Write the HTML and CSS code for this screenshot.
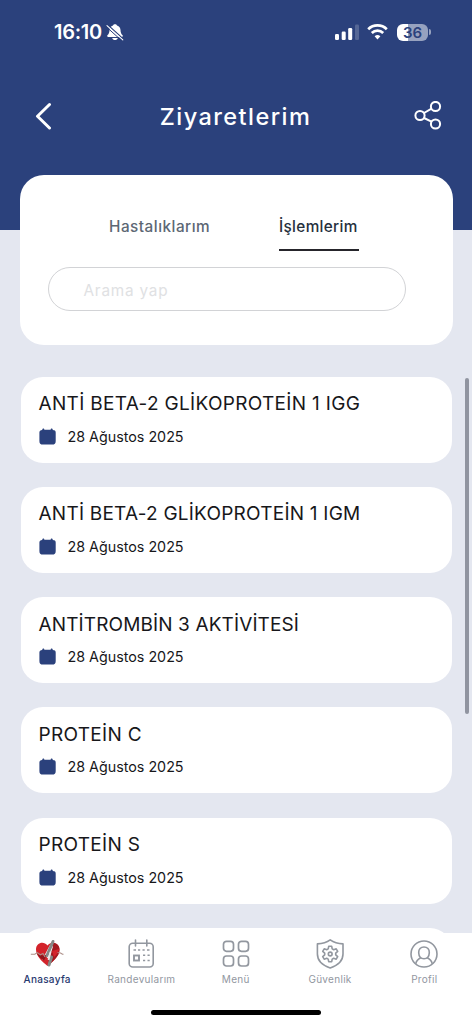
FILE: index.html
```html
<!DOCTYPE html>
<html lang="tr">
<head>
<meta charset="utf-8">
<title>Ziyaretlerim</title>
<link rel="stylesheet" href="styles.css">
</head>
<body>
<div class="app">
  <header class="header">
    <div class="status">
      <div class="status-left">
        <span class="time">16:10</span>
        <svg class="bell" width="18" height="18" viewBox="0 0 18 18"><path d="M9 1.200c-1 0-1.700.5-2 1.200C4.700 3 3.600 4.700 3.500 7c-.1 2.700-.7 3.900-1.900 5.100-.7.7-.5 1.800.4 1.800h14c.9 0 1.100-1.100.4-1.800C15.200 10.900 14.600 9.700 14.500 7c-.1-2.300-1.200-4-3.500-4.600C10.700 1.700 10 1.200 9 1.200zM6.200 14.900c.4 1.300 1.500 2.100 2.800 2.100s2.400-.8 2.800-2.100z" fill="#fff"/><path d="M1.800 1.900l15.500 14" stroke="#2b417c" stroke-width="1.300"/><path d="M1 2.600l15.800 14.300" stroke="#fff" stroke-width="1.100" stroke-linecap="round"/><path d="M.3 3.800l15.500 14" stroke="#2b417c" stroke-width="1"/></svg>
      </div>
      <div class="status-right">
        <svg width="24" height="16" viewBox="0 0 24 16" fill="#fff"><rect y="10" width="4" height="6" rx="1.200"/><rect x="6.700" y="7.500" width="4" height="8.500" rx="1.200"/><rect x="13.200" y="4" width="4" height="12" rx="1.200"/><rect x="20" y=".5" width="4" height="15.500" rx="1.200" opacity=".2"/></svg>
        <svg class="wifi" width="21" height="16" viewBox="0 0 21 16" fill="none" stroke="#fff" stroke-width="2.700"><path d="M1.200 5.200a13.300 13.300 0 0 1 18.600 0"/><path d="M4.800 9a8.200 8.200 0 0 1 11.400 0"/><path d="M10.500 15.500l-2.900-3.200a4.300 4.300 0 0 1 5.800 0z" fill="#fff" stroke="none"/></svg>
        <span class="battery">36</span><i class="battery-cap"></i>
      </div>
    </div>
    <div class="titlebar">
      <svg class="back" width="18" height="28" viewBox="0 0 18 28" fill="none" stroke="#fff" stroke-width="3" stroke-linecap="round" stroke-linejoin="round"><path d="M15.500 2.500L3.500 14.200l12 11.800"/></svg>
      <h1>Ziyaretlerim</h1>
      <svg class="share" width="28" height="30" viewBox="0 0 28 30" fill="none" stroke="#fff" stroke-width="2"><circle cx="6" cy="14.500" r="4.600"/><circle cx="21.500" cy="5.500" r="4.600"/><circle cx="21.500" cy="23" r="4.600"/><path d="M10 12l7.500-4.300M10 17l7.500 3.700"/></svg>
    </div>
  </header>
  <section class="panel">
    <div class="tabs"><span class="tab">Hastalıklarım</span><span class="tab active">İşlemlerim</span></div>
    <div class="search"><span>Arama yap</span></div>
  </section>
  <main class="list">
    <article class="card"><h2 class="t1">ANTİ BETA-2 GLİKOPROTEİN 1 IGG</h2><div class="date"><svg width="17" height="17" viewBox="0 0 17 17"><use href="#cal"/></svg><span>28 Ağustos 2025</span></div></article>
    <article class="card"><h2 class="t2">ANTİ BETA-2 GLİKOPROTEİN 1 IGM</h2><div class="date"><svg width="17" height="17" viewBox="0 0 17 17"><use href="#cal"/></svg><span>28 Ağustos 2025</span></div></article>
    <article class="card"><h2 class="t3">ANTİTROMBİN 3 AKTİVİTESİ</h2><div class="date"><svg width="17" height="17" viewBox="0 0 17 17"><use href="#cal"/></svg><span>28 Ağustos 2025</span></div></article>
    <article class="card"><h2 class="t4">PROTEİN C</h2><div class="date"><svg width="17" height="17" viewBox="0 0 17 17"><use href="#cal"/></svg><span>28 Ağustos 2025</span></div></article>
    <article class="card"><h2 class="t5">PROTEİN S</h2><div class="date"><svg width="17" height="17" viewBox="0 0 17 17"><use href="#cal"/></svg><span>28 Ağustos 2025</span></div></article>
    <article class="card"></article>
  </main>
  <i class="scrollbar"></i>
  <nav class="nav">
    <div class="items">
      <div class="item current"><svg width="34" height="30" viewBox="0 0 34 30"><path d="M17.500 27C13.500 23.500 6 18 6 10.500 6 4 13.500 1.500 17.500 6.500 21.500 1.500 29.500 4 29.500 10.500 29.500 18 21.500 23.500 17.500 27z" fill="#d3232b"/><path d="M22 4c4-.5 7.500 2 7.500 6.500 0 7-7 12-10.500 15l-1-5z" fill="#a3191f"/><path d="M22 12l7-2c-.5 3.500-2.500 6-5 8z" fill="#d3232b"/><path d="M12 21l8-15 3 1.500-4 13-3-3z" fill="#f5f4f5"/><path d="M7 15l6 1.500 4-1-3 6c-3-2-5.500-4-7-6.500z" fill="#8e171d"/><path d="M.8 15.300h4l2.500-1.700 3 2.200 2.700-1.300 2 3.500M27.500 13.500l3 .5 2 1.300h1" fill="none" stroke="#ad8f88" stroke-width="1.100"/><path d="M23 2.500l-6 14M21.500 18l-2.500 8" fill="none" stroke="#858886" stroke-width="3" stroke-linecap="round"/><path d="M20.500 13l-2 8" stroke="#eceaea" stroke-width="1.800"/></svg><span>Anasayfa</span></div>
      <div class="item"><svg width="30" height="30" viewBox="0 0 30 30" fill="none" stroke="#92979f" stroke-width="1.600"><rect x="3.200" y="4.300" width="24" height="23.700" rx="3.500"/><path d="M9.500 1v6M20.800 1v6" stroke-linecap="round"/><path d="M7.500 11h2.500M12 11h2.200M16.500 11h2.200M21 11h2.500M17 16.300h2.200M21.500 16.300h2.200M17 21.500h2.200M21.500 21.500h2.200"/><rect x="8" y="16.500" width="5" height="5" stroke-width="1.900"/></svg><span>Randevularım</span></div>
      <div class="item"><svg width="30" height="30" viewBox="0 0 30 30" fill="none" stroke="#92979f" stroke-width="1.700"><rect x="2.500" y="2.300" width="10" height="10" rx="3"/><rect x="17.500" y="2.300" width="10" height="10" rx="3"/><rect x="2.500" y="17" width="10" height="10" rx="3"/><rect x="17.500" y="17" width="10" height="10" rx="3"/></svg><span>Menü</span></div>
      <div class="item"><svg width="30" height="30" viewBox="0 0 30 30" fill="none" stroke="#92979f" stroke-width="1.600" stroke-linejoin="round"><path d="M15.200.9C11.500 3.700 7 4.800 2.400 4.900V15c0 7 5.500 11.500 12.800 14C22.500 26.500 28 22 28 15V4.900C23.500 4.800 19 3.700 15.200.9z"/><path d="M13.700 7.300h3l.5 2.600 1.500.8 2.500-.9 1.500 2.600-2 1.800v1.600l2 1.800-1.500 2.600-2.500-.9-1.500.8-.5 2.600h-3l-.5-2.600-1.500-.8-2.500.9-1.500-2.600 2-1.800v-1.600l-2-1.800 1.500-2.600 2.500.9 1.500-.8z"/><circle cx="15.200" cy="15" r="1.900"/></svg><span>Güvenlik</span></div>
      <div class="item"><svg width="30" height="30" viewBox="0 0 30 30" fill="none" stroke="#92979f" stroke-width="1.600"><circle cx="15" cy="15" r="13"/><path d="M15 8c3.300 0 5.500 2.300 5.300 5.700-.2 3.800-2.500 6-5.300 6s-5.100-2.200-5.300-6C9.500 10.300 11.700 8 15 8zM6.700 24.900c.6-3 2.500-5 5.200-6.200M23.300 24.900c-.6-3-2.500-5-5.200-6.200"/></svg><span>Profil</span></div>
    </div>
    <i class="home"></i>
  </nav>
</div>
<svg class="defs"><symbol id="cal" viewBox="0 0 17 17"><path d="M4.300.5c.6 0 1 .5 1.100 1.300h6.200c.1-.8.500-1.300 1.100-1.300s1 .6 1.100 1.400c1.800.1 2.900.7 2.900 2.500v8.500c0 2.700-1 3.600-3.600 3.600H4c-2.600 0-3.600-.9-3.600-3.600V4.400c0-1.700 1-2.300 2.800-2.500C3.300 1.100 3.700.5 4.300.5z" fill="#2b417c"/></symbol></svg>
</body>
</html>
```

FILE: styles.css
```css
* { box-sizing: border-box; }
body { margin: 0; font-family: Inter, "Noto Sans", sans-serif; background: #e4e7f0; }
.app { position: relative; width: 472px; height: 1024px; overflow: hidden; }
.header { height: 230px; background: #2b417c; color: #fff; }
.status { display: flex; justify-content: space-between; align-items: center; height: 64px; padding: 0 41px 0 54px; }
.status-left, .status-right { display: flex; align-items: center; }
.time { font-size: 20px; font-weight: 600; letter-spacing: -.3px; }
.bell { margin-left: 4px; }
.wifi { margin: 0 9px 0 8px; }
.battery { width: 31px; height: 17px; border-radius: 6px; background: linear-gradient(90deg, #fff 36%, #97a2bf 36%); color: #2b417c; font-size: 15px; font-weight: 600; line-height: 17px; text-align: center; }
.battery-cap { width: 2px; height: 6px; margin-left: 1px; border-radius: 0 3px 3px 0; background: #97a2bf; }
.titlebar { display: grid; grid-template-columns: 30px 1fr 30px; align-items: center; height: 104px; padding: 0 28px 0 34px; }
h1 { margin: 2px 7px 0 0; text-align: center; font-size: 23.5px; line-height: 30px; font-weight: 500; letter-spacing: 1.45px; }
.panel { position: relative; width: 433px; height: 170px; margin: -55px 0 0 19.5px; padding: 38px 28px 0; background: #fff; border-radius: 24px; }
.tabs { display: flex; height: 38px; padding-left: 61.500px; font-size: 15.3px; line-height: 27px; }
.tab { width: 101px; margin-right: 69px; color: #5c6774; white-space: nowrap; letter-spacing: .5px; font-weight: 450; }
.tab.active { width: 80px; margin: 0; color: #26303d; border-bottom: 2px solid #26252b; letter-spacing: .35px; font-weight: 500; }
.search { width: 358px; height: 44px; margin-top: 16px; padding-left: 35px; border: 1px solid #d2d3d6; border-radius: 22px; color: #e0e1e3; font-size: 15.3px; line-height: 45px; letter-spacing: .8px; }
.list { display: flex; flex-direction: column; gap: 24.3px; margin: 31.5px 20.5px 0; }
.card { flex: none; height: 86px; padding: 15.5px 18px; border-radius: 22px; background: #fff; }
h2 { margin: 0; color: #17171a; font-size: 19px; line-height: 24px; font-weight: 400; white-space: nowrap; }
.t1 { letter-spacing: .32px; }
.t2 { letter-spacing: .23px; }
.t3 { letter-spacing: .12px; }
.t4 { letter-spacing: .3px; }
.t5 { letter-spacing: .3px; }
.date { display: flex; align-items: center; gap: 12px; margin-top: 10px; height: 20px; color: #17171a; font-size: 14.3px; }
.scrollbar { position: absolute; left: 465px; top: 378px; width: 4px; height: 336px; border-radius: 2px; background: #9094a0; }
.nav { position: absolute; left: 0; bottom: 0; width: 472px; height: 91px; background: #fff; }
.items { display: grid; grid-template-columns: repeat(5, 94.3px); padding-top: 6px; }
.item { display: flex; flex-direction: column; align-items: center; height: 60px; color: #92979f; font-size: 10px; letter-spacing: .3px; }
.item svg { height: 30px; flex: none; overflow: visible; }
.item span { line-height: 14px; margin-top: 3px; }
.current { color: #28396f; font-weight: 500; }
.home { display: block; width: 170px; height: 5px; margin: 11px auto 0; border-radius: 3px; background: #000; }
.defs { position: absolute; width: 0; height: 0; }
```
